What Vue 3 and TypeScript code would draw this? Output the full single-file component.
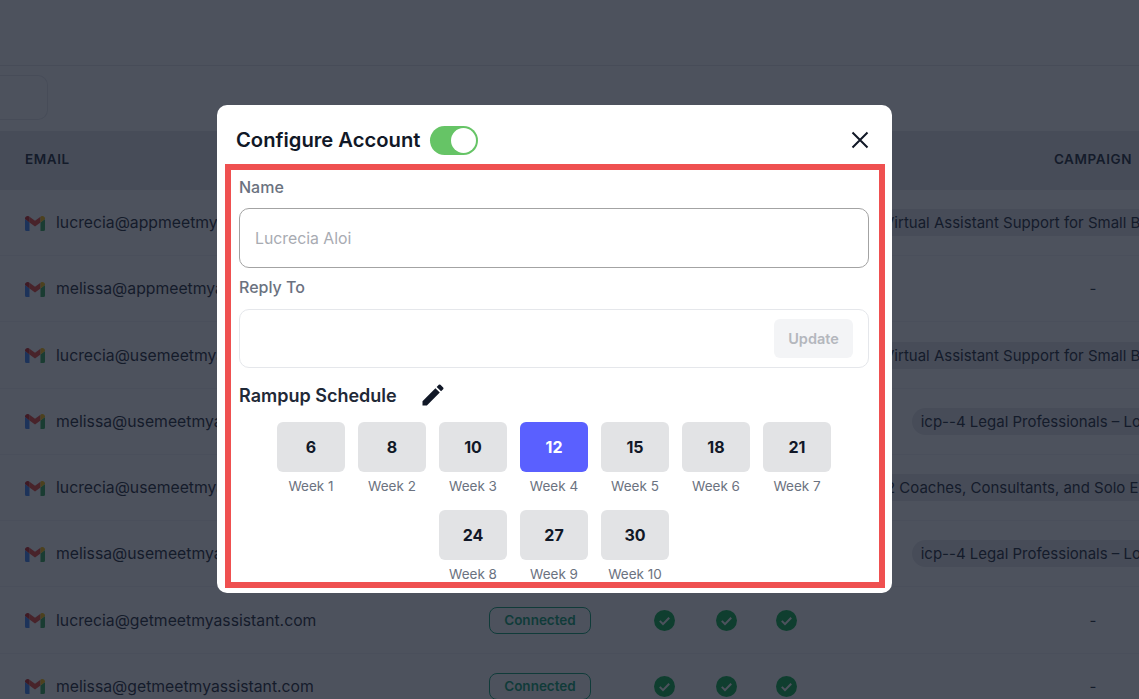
<script setup lang="ts">
type Account = { email: string; campaign: string }

const accounts: Account[] = [
  { email: 'lucrecia@appmeetmyassistant.com', campaign: 'icp--1 Virtual Assistant Support for Small Business Owners Who Expand' },
  { email: 'melissa@appmeetmyassistant.com', campaign: '' },
  { email: 'lucrecia@usemeetmyassistant.com', campaign: 'icp--1 Virtual Assistant Support for Small Business Owners Who Expand' },
  { email: 'melissa@usemeetmyassistant.com', campaign: 'icp--4 Legal Professionals – Lost in Admin Tasks' },
  { email: 'lucrecia@usemeetmyassistant.net', campaign: 'icp--2 Coaches, Consultants, and Solo Entrepreneurs Who Are Busy' },
  { email: 'melissa@usemeetmyassistant.net', campaign: 'icp--4 Legal Professionals – Lost in Admin Tasks' },
  { email: 'lucrecia@getmeetmyassistant.com', campaign: '' },
  { email: 'melissa@getmeetmyassistant.com', campaign: '' }
]

const schedule = [6, 8, 10, 12, 15, 18, 21, 24, 27, 30]
const activeWeek = 4
</script>

<template>
  <div class="page">
    <div class="topbar"></div>
    <div class="toolbar"><div class="tool-btn"></div></div>

    <div class="table-row table-head">
      <div class="cell-email">EMAIL</div>
      <div></div>
      <div></div>
      <div></div>
      <div></div>
      <div class="cell-campaign">CAMPAIGN</div>
    </div>
    <div v-for="item in accounts" :key="item.email" class="table-row">
      <div class="cell-email">
        <svg class="gmail" viewBox="0 0 20 16" width="20" height="16">
          <path fill="#4285f4" d="M0 3.500v11A1.500 1.500 0 0 0 1.500 16h3V7.500L0 4z" />
          <path fill="#34a853" d="M20 3.500v11a1.500 1.500 0 0 1-1.500 1.500h-3V7.500L20 4z" />
          <path fill="#ea4335" d="M4.500 7.500 10 11.600l5.500-4.100V1.700L10 5.800 4.500 1.700z" />
          <path fill="#c5221f" d="M0 3.600C0 1.300 2.400.4 4 1.400l.5.300v5.800L0 4.100z" />
          <path fill="#fbbc04" d="M20 3.600c0-2.300-2.400-3.200-4-2.200l-.5.300v5.800L20 4.100z" />
        </svg>
        <span>{{ item.email }}</span>
      </div>
      <div><span class="status">Connected</span></div>
      <div v-for="n in 3" :key="n" class="cell-check">
        <svg viewBox="0 0 21 21" width="21" height="21">
          <circle cx="10.500" cy="10.500" r="10.500" fill="#0bb04a" />
          <path d="M5.800 10.900l3.200 3.200 6.200-6.400" fill="none" stroke="#fff" stroke-width="2" />
        </svg>
      </div>
      <div class="cell-campaign">
        <span v-if="item.campaign" class="campaign-pill">{{ item.campaign }}</span>
        <span v-else>-</span>
      </div>
    </div>

    <div class="overlay">
      <div class="modal">
        <div class="modal-head">
          <h2 class="modal-title">Configure Account</h2>
          <span class="toggle"><span class="knob"></span></span>
          <svg class="close" viewBox="0 0 18 18" width="18" height="18">
            <path d="M1.500 1.500l15 15M16.500 1.500l-15 15" stroke="#111827" stroke-width="2" fill="none" />
          </svg>
        </div>

        <div class="highlight">
          <label class="field-label">Name</label>
          <input class="name-input" placeholder="Lucrecia Aloi" />

          <label class="field-label reply-label">Reply To</label>
          <div class="reply-box">
            <input class="reply-input" />
            <button class="update-btn">Update</button>
          </div>

          <div class="rampup-head">
            <h3 class="rampup-title">Rampup Schedule</h3>
            <svg viewBox="0 0 24 24" width="28" height="28">
              <path fill="#111827" d="M3 17.250V21h3.750L17.810 9.940l-3.750-3.750L3 17.250zM20.710 7.040a1 1 0 0 0 0-1.410l-2.340-2.340a1 1 0 0 0-1.410 0l-1.830 1.830 3.750 3.750 1.830-1.830z" />
            </svg>
          </div>

          <div class="weeks">
            <div v-for="(value, i) in schedule" :key="i" class="week">
              <div class="week-tile" :class="{ active: i + 1 === activeWeek }">{{ value }}</div>
              <div class="week-label">Week {{ i + 1 }}</div>
            </div>
          </div>
        </div>
      </div>
    </div>
  </div>
</template>

<style>
body {
  margin: 0;
  background: #fff;
}
</style>

<style scoped>
.page {
  position: relative;
  width: 1139px;
  height: 699px;
  overflow: hidden;
  background: #fff;
  font-family: Inter, "Noto Sans", sans-serif;
  color: #1f2937;
}

.topbar {
  height: 65px;
  border-bottom: 1px solid #e5e7eb;
}

.toolbar {
  height: 65px;
  padding-top: 9px;
  box-sizing: border-box;
}

.tool-btn {
  width: 48px;
  height: 45px;
  box-sizing: border-box;
  border: 1px solid #e5e7eb;
  border-left: none;
  border-radius: 0 10px 10px 0;
}

.table-row {
  display: grid;
  grid-template-columns: 489px 140px 70px 54px 66px 548px;
  align-items: center;
  height: 66.250px;
  box-sizing: border-box;
  border-bottom: 1px solid #f3f4f6;
  font-size: 15.750px;
}

.table-head {
  height: 58.900px;
  padding-bottom: 3px;
  background: #e5e7eb;
  border-bottom: none;
  font-size: 13.500px;
  font-weight: 600;
  letter-spacing: 0.6px;
}

.cell-email {
  display: flex;
  align-items: center;
  gap: 11px;
  padding-left: 25px;
}

.cell-campaign {
  text-align: center;
  white-space: nowrap;
}

.table-row:not(.table-head) .cell-campaign {
  font-size: 15px;
}

.cell-check {
  display: flex;
  justify-content: center;
}

.status {
  display: block;
  width: 102px;
  height: 27px;
  line-height: 25px;
  box-sizing: border-box;
  border: 1px solid #0ea572;
  border-radius: 8px;
  text-align: center;
  font-size: 13.500px;
  font-weight: 600;
  color: #0ea572;
}

.campaign-pill {
  display: inline-block;
  padding: 0 9px;
  height: 27px;
  line-height: 27px;
  border-radius: 14px;
  background: #e5e7eb;
}

.overlay {
  position: absolute;
  inset: 0;
  background: rgba(17, 24, 39, 0.75);
}

.modal {
  position: absolute;
  left: 217px;
  top: 105px;
  width: 675px;
  height: 488px;
  box-sizing: border-box;
  padding: 0 7px 5px 8px;
  background: #fff;
  border-radius: 10px;
}

.modal-head {
  display: flex;
  align-items: center;
  height: 59px;
  padding: 11px 16px 0 11px;
  box-sizing: border-box;
}

.modal-title {
  margin: 0 10px 0 0;
  font-size: 20.200px;
  font-weight: 600;
  line-height: 26px;
  color: #111827;
}

.toggle {
  display: flex;
  justify-content: flex-end;
  align-items: center;
  width: 48px;
  height: 29px;
  padding: 0 2px;
  box-sizing: border-box;
  border-radius: 15px;
  background: #66c466;
}

.knob {
  width: 25px;
  height: 25px;
  border-radius: 50%;
  background: #fff;
}

.close {
  margin-left: auto;
}

.highlight {
  height: 424px;
  box-sizing: border-box;
  border: 6px solid #ef5050;
  padding: 7px 10px 0 8px;
  overflow: hidden;
}

.field-label {
  display: block;
  font-size: 16px;
  font-weight: 500;
  line-height: 20px;
  color: #6b7280;
}

.name-input {
  display: block;
  width: 100%;
  height: 60px;
  margin-top: 11px;
  padding: 0 15px;
  box-sizing: border-box;
  border: 1px solid #a3a3a3;
  border-radius: 10px;
  font-family: inherit;
  font-size: 15.800px;
  outline: none;
}

.name-input::placeholder {
  color: #a8abb2;
}

.reply-label {
  margin-top: 9px;
}

.reply-box {
  display: flex;
  align-items: center;
  justify-content: space-between;
  height: 59px;
  margin-top: 12px;
  padding: 0 15px;
  box-sizing: border-box;
  border: 1px solid #e5e7eb;
  border-radius: 10px;
}

.reply-input {
  flex: 1;
  min-width: 0;
  border: none;
  outline: none;
}

.update-btn {
  width: 79px;
  height: 39px;
  border: none;
  border-radius: 6px;
  background: #f3f4f6;
  color: #b4b7bd;
  font-family: inherit;
  font-size: 14.500px;
  font-weight: 600;
}

.rampup-head {
  display: flex;
  align-items: center;
  gap: 22px;
  height: 28px;
  margin-top: 13px;
}

.rampup-title {
  margin: 0;
  font-size: 18px;
  font-weight: 600;
  color: #1f2937;
}

.weeks {
  display: flex;
  flex-wrap: wrap;
  justify-content: center;
  gap: 14px 13px;
  margin-top: 13px;
}

.week {
  width: 68px;
}

.week-tile {
  display: flex;
  align-items: center;
  justify-content: center;
  height: 50px;
  border-radius: 6px;
  background: #e2e3e5;
  font-size: 16px;
  font-weight: 700;
  color: #111827;
}

.week-tile.active {
  background: #5a60ff;
  color: #fff;
}

.week-label {
  margin-top: 4px;
  line-height: 20px;
  font-size: 13.500px;
  text-align: center;
  color: #6b7280;
}
</style>
